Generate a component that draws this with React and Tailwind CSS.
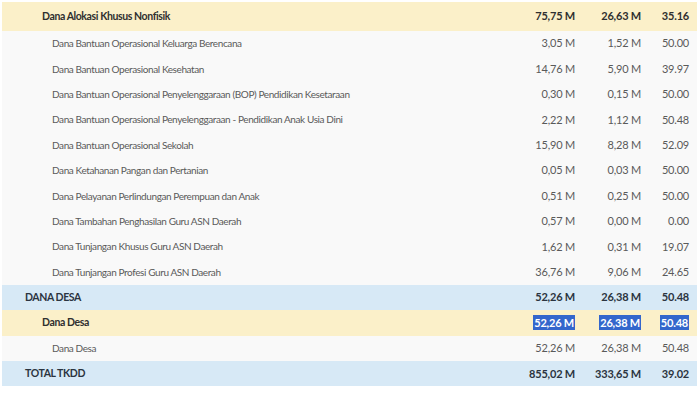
const rows = [
  { label: 'Dana Alokasi Khusus Nonfisik', a: '75,75 M', b: '26,63 M', c: '35.16', type: 'sub', first: true },
  { label: 'Dana Bantuan Operasional Keluarga Berencana', a: '3,05 M', b: '1,52 M', c: '50.00', type: 'item' },
  { label: 'Dana Bantuan Operasional Kesehatan', a: '14,76 M', b: '5,90 M', c: '39.97', type: 'item' },
  { label: 'Dana Bantuan Operasional Penyelenggaraan (BOP) Pendidikan Kesetaraan', a: '0,30 M', b: '0,15 M', c: '50.00', type: 'item' },
  { label: 'Dana Bantuan Operasional Penyelenggaraan - Pendidikan Anak Usia Dini', a: '2,22 M', b: '1,12 M', c: '50.48', type: 'item' },
  { label: 'Dana Bantuan Operasional Sekolah', a: '15,90 M', b: '8,28 M', c: '52.09', type: 'item' },
  { label: 'Dana Ketahanan Pangan dan Pertanian', a: '0,05 M', b: '0,03 M', c: '50.00', type: 'item' },
  { label: 'Dana Pelayanan Perlindungan Perempuan dan Anak', a: '0,51 M', b: '0,25 M', c: '50.00', type: 'item' },
  { label: 'Dana Tambahan Penghasilan Guru ASN Daerah', a: '0,57 M', b: '0,00 M', c: '0.00', type: 'item' },
  { label: 'Dana Tunjangan Khusus Guru ASN Daerah', a: '1,62 M', b: '0,31 M', c: '19.07', type: 'item' },
  { label: 'Dana Tunjangan Profesi Guru ASN Daerah', a: '36,76 M', b: '9,06 M', c: '24.65', type: 'item' },
  { label: 'DANA DESA', a: '52,26 M', b: '26,38 M', c: '50.48', type: 'group' },
  { label: 'Dana Desa', a: '52,26 M', b: '26,38 M', c: '50.48', type: 'sub', selected: true },
  { label: 'Dana Desa', a: '52,26 M', b: '26,38 M', c: '50.48', type: 'item' },
  { label: 'TOTAL TKDD', a: '855,02 M', b: '333,65 M', c: '39.02', type: 'group' },
]

const rowStyle = {
  group: 'bg-[#d7e9f6] font-bold text-[#2b3440]',
  sub: 'bg-[#fbf0c9] font-bold text-[#2f2f2f]',
  item: 'bg-[#f9f9f9] text-[#5a5a5a]',
}

// label indent + size per level
const labelStyle = {
  group: 'pl-[23px] text-[10.5px] tracking-[-0.4px]',
  sub: 'pl-[40px] text-[10.5px] tracking-[-0.4px]',
  item: 'pl-[50px] text-[10px] tracking-[-0.4px]',
}

const Cell = ({ value, selected, className }) => (
  <div className={`text-right tracking-[-0.2px] ${className}`}>
    {selected ? (
      <span className="bg-[#3366cc] text-white px-[1px] py-[1px]">{value}</span>
    ) : (
      value
    )}
  </div>
)

export default function App() {
  return (
    <div className="w-[700px] h-[393px] bg-white pt-[2px] px-[2px] overflow-hidden font-['Lato','Noto_Sans',sans-serif] text-[11px]">
      <div className="flex flex-col w-[695px]">
        {rows.map((r, i) => (
          <div
            key={i}
            className={`flex items-center ${r.first ? 'h-[29px]' : 'h-[25.4px]'} ${rowStyle[r.type]}`}
          >
            <div className={`flex-1 truncate ${labelStyle[r.type]}`}>{r.label}</div>
            <Cell value={r.a} selected={r.selected} className="w-[90px]" />
            <Cell value={r.b} selected={r.selected} className="w-[66px]" />
            <Cell value={r.c} selected={r.selected} className="w-[51px] pr-[3px]" />
            <div className="w-[5px]" />
          </div>
        ))}
      </div>
    </div>
  )
}
